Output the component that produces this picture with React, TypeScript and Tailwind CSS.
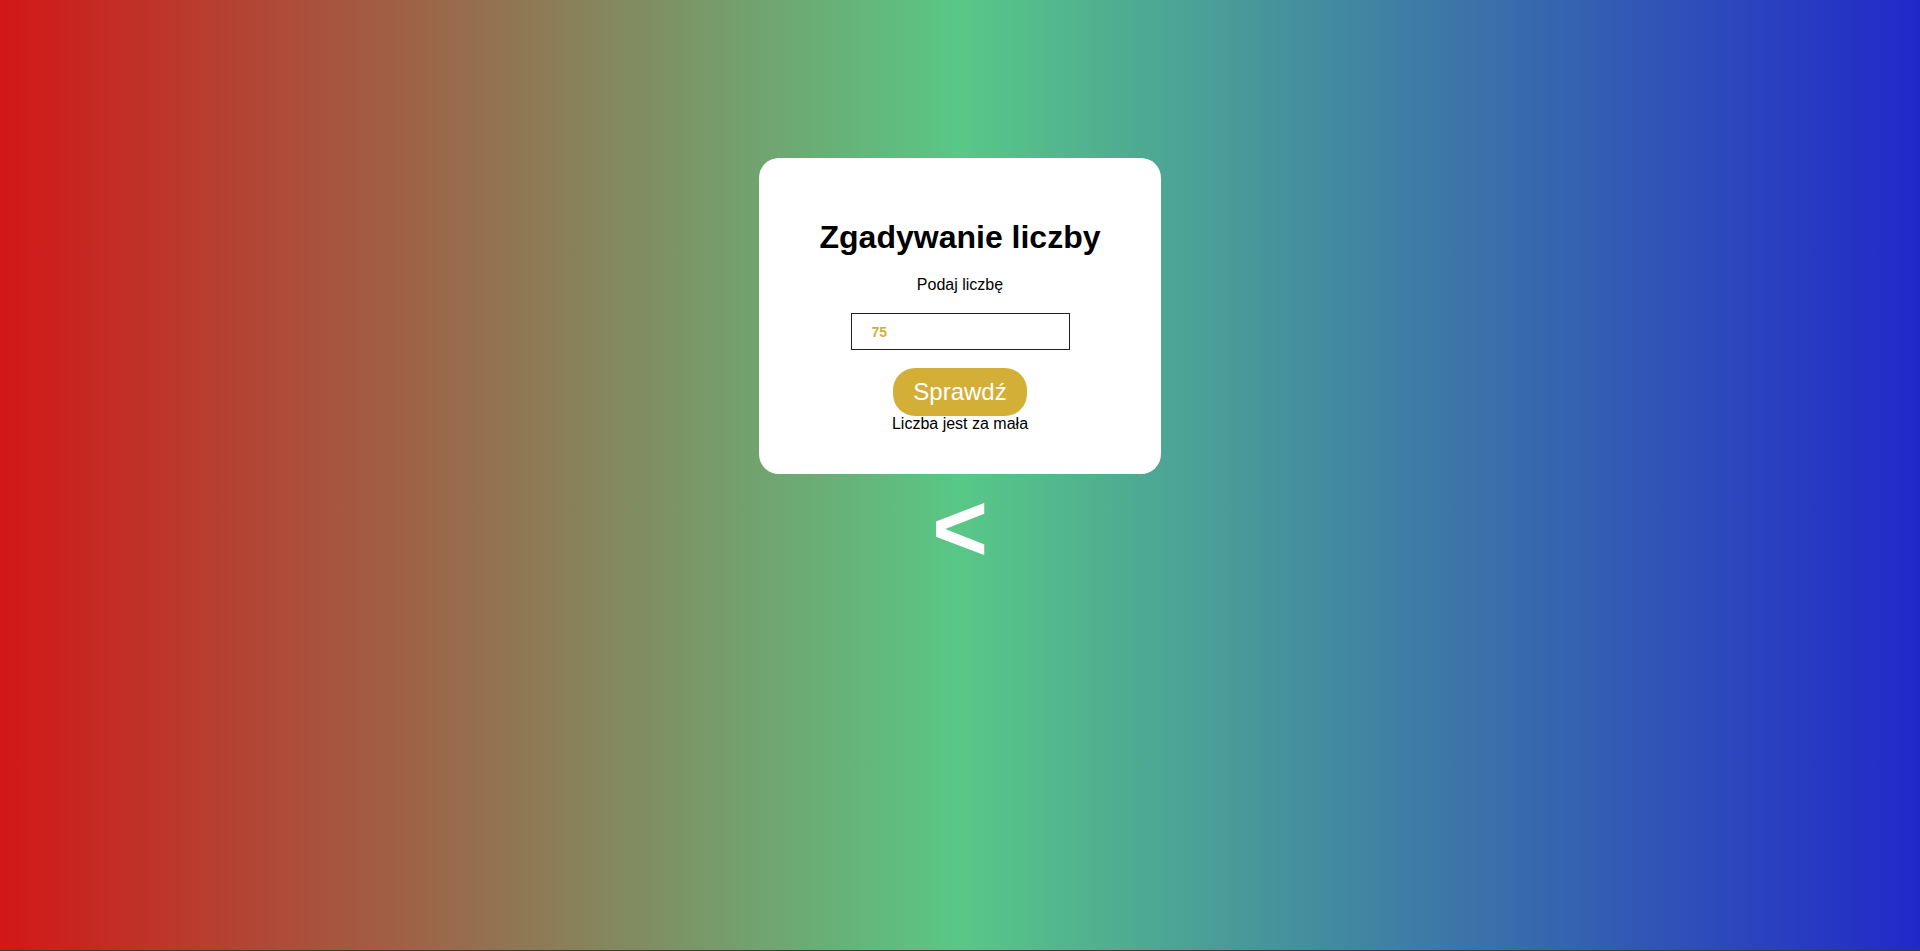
import { useState } from "react";

export default function App() {
  const [value, setValue] = useState("75");

  return (
    <div className="flex flex-col bg-[#3a3a3a] font-['Liberation_Sans',Arial,sans-serif]">
      <div className="h-[950px] bg-[linear-gradient(to_right,#d21718,#58c886,#2128c9)] flex flex-col items-center pt-[158px]">
        <div className="w-[402px] rounded-[20px] bg-white px-10 pt-[61px] pb-[41px] flex flex-col items-center text-center text-black">
          <h1 className="text-[32px] leading-[37px] font-bold">Zgadywanie liczby</h1>
          <p className="mt-5 text-base leading-[18px]">Podaj liczbę</p>
          <input
            type="text"
            value={value}
            onChange={(e) => setValue(e.target.value)}
            className="mt-[19px] w-[219px] h-[37px] border border-[#222] pl-5 text-[14px] font-semibold text-[#d4af37] outline-none"
          />
          <button className="mt-[18px] h-12 px-5 rounded-[22px] bg-[#d4af37] text-white text-[24px] leading-none">
            Sprawdź
          </button>
          <p className="-mt-px text-base leading-[18px]">Liczba jest za mała</p>
        </div>
        <a href="#" className="mt-[6px] text-white font-bold text-[96px] leading-none no-underline">
          &lt;
        </a>
      </div>
      <div className="h-px" />
    </div>
  );
}
